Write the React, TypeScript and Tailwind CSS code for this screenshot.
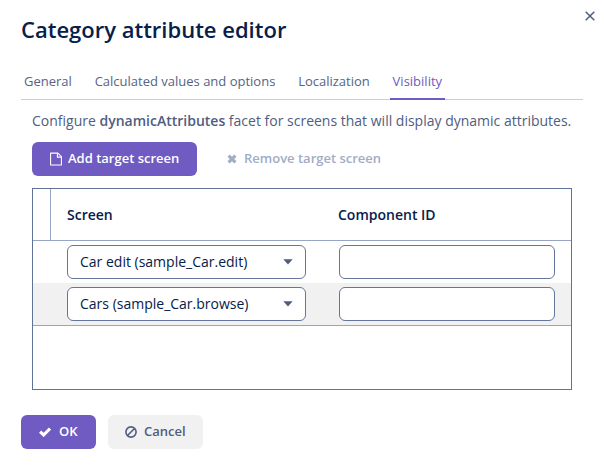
import type { ReactNode } from "react";

function Tab({ label, className }: { label: string; className: string }) {
  return <div className={`-mb-px h-[29px] px-[3px] text-[13px] leading-[20px] whitespace-nowrap ${className}`}>{label}</div>;
}

function Row({ value, alt }: { value: string; alt?: boolean }) {
  return (
    <div className={`flex h-[42px] items-center pl-[34px] ${alt ? "bg-[#f1f1f1]" : ""}`}>
      <div className="flex h-[34px] w-[239px] items-center justify-between rounded-[6px] border border-[#66759e] bg-white pr-[12px] pl-[12px] text-[14px]">
        <span className="-mt-[2px]">{value}</span>
        <svg width="10" height="6" viewBox="0 0 10 6"><path d="M.3 .3H9.7L5 5.4Z" fill="#4f5d7f" /></svg>
      </div>
      <div className="ml-[33px] h-[34px] w-[216px] rounded-[6px] border border-[#66759e] bg-white" />
    </div>
  );
}

function Button({ children, className }: { children: ReactNode; className: string }) {
  return <button className={`flex h-[34px] items-center rounded-[6px] text-[13px] font-semibold whitespace-nowrap ${className}`}>{children}</button>;
}

function FileIcon() {
  return (
    <svg width="12" height="14" viewBox="0 0 12 14" fill="none" stroke="currentColor" strokeWidth="1.05">
      <path d="M.6 1.1V12.9H11.4V4.6L7.9 1.1Z" strokeLinejoin="round" /><path d="M7.4 1.2V5.1H11.3" />
    </svg>
  );
}

function RemoveIcon() {
  return <svg width="10" height="10" viewBox="0 0 10 10"><path d="M1.6 1.7L8.4 8.3M8.4 1.7L1.6 8.3" stroke="currentColor" strokeWidth="3.2" /></svg>;
}

function CheckIcon() {
  return <svg width="12" height="10" viewBox="0 0 12 10"><path d="M1.1 4.7L4.6 8L11 1.6" fill="none" stroke="currentColor" strokeWidth="3.1" /></svg>;
}

function BanIcon() {
  return (
    <svg width="12" height="12" viewBox="0 0 12 12" fill="none" stroke="currentColor" strokeWidth="1.6">
      <circle cx="6" cy="6" r="5.1" /><path d="M2.5 9.5L9.5 2.5" />
    </svg>
  );
}

export default function App() {
  return (
    <div className="h-[470px] w-[604px] overflow-hidden bg-white px-[21px] font-['Open_Sans',sans-serif] text-[#06204a]">
      <div className="flex h-[71px] justify-between">
        <h1 className="pt-[13px] text-[22px] leading-[32px] font-semibold">Category attribute editor</h1>
        <svg className="mt-[11px] -mr-[12px]" width="10" height="10" viewBox="0 0 10 10"><path d="M.7 .7L9.3 9.3M9.3 .7L.7 9.3" stroke="#4f5d7f" strokeWidth="1.5" /></svg>
      </div>
      <div className="flex h-[29px] w-[562px] gap-[16.8px] border-b border-[#cbcbe3] text-[#566384]">
        <Tab label="General" className="" />
        <Tab label="Calculated values and options" className="" />
        <Tab label="Localization" className="" />
        <Tab label="Visibility" className="w-[55px] border-b-2 border-[#6f5bc1] text-[#6f5bc1]" />
      </div>
      <div className="px-[11px]">
        <p className="pt-[11px] text-[14px] leading-[20px] whitespace-nowrap text-[#4f5d7f]">Configure <b className="font-semibold">dynamicAttributes</b> facet for screens that will display dynamic attributes.</p>
        <div className="mt-[11px] flex">
          <Button className="w-[165px] gap-[6px] bg-[#6f5bc1] pl-[18px] text-white"><FileIcon />Add target screen</Button>
          <Button className="gap-[7px] pl-[30px] text-[#a1acc6]"><RemoveIcon />Remove target screen</Button>
        </div>
        <div className="mt-[12px] h-[202px] w-[540px] border border-[#5f7298]">
          <div className="flex h-[52px] items-center border-b border-[#98a4c3] text-[14px] font-semibold">
            <div className="h-full w-[18px] border-r border-[#98a4c3]" />
            <div className="w-[271px] pl-[16px]">Screen</div><div className="pl-[16px]">Component ID</div>
          </div>
          <div className="border-b border-[#98a4c3]"><Row value="Car edit (sample_Car.edit)" /><Row value="Cars (sample_Car.browse)" alt /></div>
        </div>
      </div>
      <div className="mt-[25px] flex gap-[12px]">
        <Button className="w-[75px] gap-[8px] bg-[#6f5bc1] pl-[18px] text-white"><CheckIcon />OK</Button>
        <Button className="w-[95px] gap-[7px] bg-[#f1f1f1] pl-[17px] text-[#4f5d7f]"><BanIcon />Cancel</Button>
      </div>
    </div>
  );
}
